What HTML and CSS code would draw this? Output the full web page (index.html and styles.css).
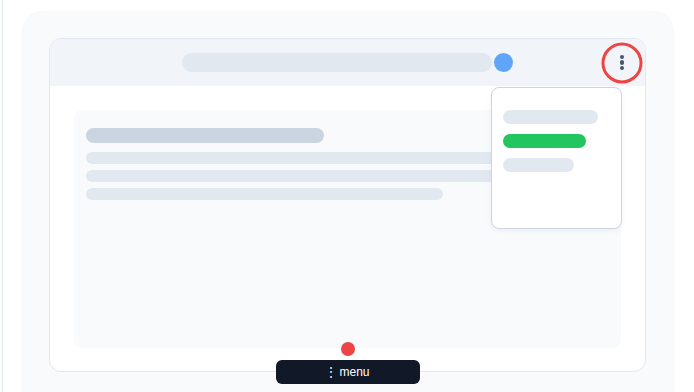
FILE: index.html
```html
<!DOCTYPE html>
<html lang="en">
<head>
  <meta charset="UTF-8">
  <title>Kebab menu preview</title>
  <link rel="stylesheet" href="styles.css">
</head>
<body>
  <div class="frame">
    <div class="stage">
      <div class="panel">
        <div class="panel-head">
          <div class="head-group">
            <div class="search"></div>
            <div class="avatar"></div>
          </div>
          <button class="kebab" aria-label="More">
            <span class="dot"></span><span class="dot"></span><span class="dot"></span>
            <span class="ring"></span>
          </button>
        </div>

        <div class="panel-body">
          <div class="content">
            <div class="sk title"></div>
            <div class="sk line"></div>
            <div class="sk line"></div>
            <div class="sk line short"></div>
          </div>
        </div>

        <div class="dropdown">
          <div class="item"></div>
          <div class="item active"></div>
          <div class="item small"></div>
        </div>

        <span class="marker"></span>
        <div class="menu-tag"><span class="tag-icon">⋮</span>menu</div>
      </div>
    </div>
  </div>
</body>
</html>
```

FILE: styles.css
```css
html, body { margin: 0; padding: 0; background: #fff; }
body { font-family: "Liberation Sans", Arial, sans-serif; overflow: hidden; }

.frame { margin-left: 2px; height: 392px; overflow: hidden; border-left: 1px solid #e2e8f0; padding: 12px 0 0 20px; box-sizing: border-box; }
.stage { width: 650px; height: 400px; box-sizing: border-box; background: #f8fafc; border-radius: 20px; padding: 26px 26px 0 26px; box-shadow: 0 0 3px rgba(15,23,42,0.08); }

.panel { position: relative; width: 597px; height: 334px; box-sizing: border-box; background: #fff; border: 1px solid #e2e8f0; border-radius: 12px; }
.panel-head { height: 47px; background: #f1f5f9; border-radius: 11px 11px 0 0; display: grid; grid-template-columns: 1fr auto 1fr; align-items: center; padding: 0 11px; }
.head-group { grid-column: 2; display: flex; align-items: center; gap: 2px; }
.search { width: 310px; height: 19px; background: #e2e8f0; border-radius: 10px; }
.avatar { width: 19px; height: 19px; background: #60a5fa; border-radius: 50%; }

.kebab { grid-column: 3; justify-self: end; position: relative; width: 24px; height: 24px; padding: 0; border: none; background: transparent; display: flex; flex-direction: column; align-items: center; justify-content: center; gap: 1px; }
.kebab .dot { width: 4.5px; height: 4.5px; border-radius: 50%; background: #475569; }
.ring { position: absolute; left: 50%; top: 50%; width: 41px; height: 41px; box-sizing: border-box; transform: translate(-50%, -50%); border: 3px solid #ef4444; border-radius: 50%; }

.panel-body { padding: 24px; }
.content { height: 238px; box-sizing: border-box; background: #f8fafc; border-radius: 8px; padding: 18px 12px; display: flex; flex-direction: column; gap: 6px; }
.sk { border-radius: 8px; background: #e2e8f0; }
.sk.title { width: 238px; height: 15px; background: #cbd5e1; margin-bottom: 3px; }
.sk.line { height: 12px; }
.sk.short { width: 357px; }

.dropdown { position: absolute; left: 441px; top: 48px; width: 131px; height: 142px; box-sizing: border-box; background: #fff; border: 1px solid #cbd5e1; border-radius: 8px; padding: 22px 11px; display: flex; flex-direction: column; gap: 10px; box-shadow: 0 2px 6px rgba(15,23,42,0.05); }
.item { width: 95px; height: 14px; border-radius: 8px; background: #e2e8f0; }
.item.active { width: 83px; background: #22c55e; }
.item.small { width: 71px; }

.marker { position: absolute; left: 50%; top: 303px; width: 14px; height: 14px; transform: translateX(-50%); background: #ef4444; border-radius: 50%; }
.menu-tag { position: absolute; left: 50%; top: 321px; width: 144px; height: 24px; transform: translateX(-50%); background: #111827; color: #fff; border-radius: 6px; font-size: 12px; line-height: 24px; text-align: center; }
.tag-icon { margin-right: 2px; }
```
